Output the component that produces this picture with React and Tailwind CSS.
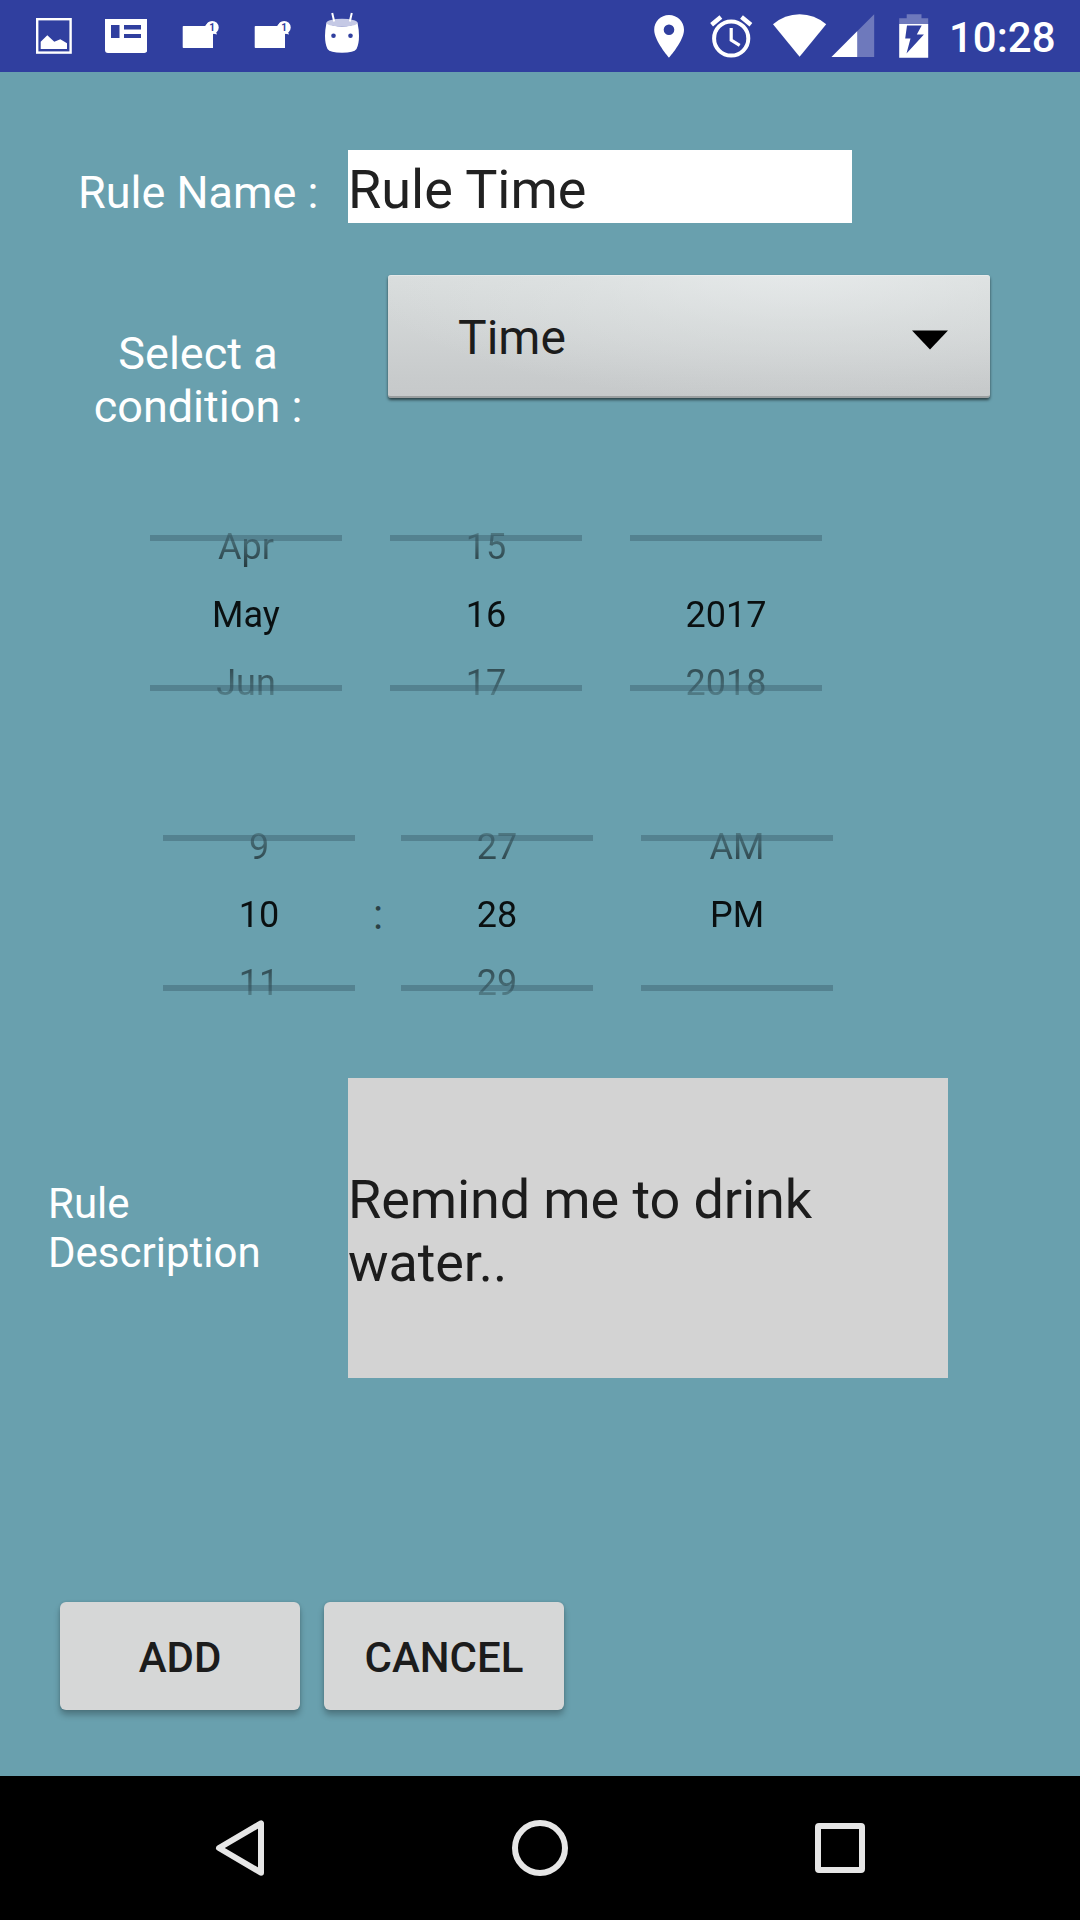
const FADE =
  '[mask-image:linear-gradient(to_bottom,transparent_-6px,black_74px,black_118px,transparent_198px)]';

function PictureIcon() {
  return (
    <svg className="h-[72px] w-[36px]" viewBox="36 0 36 72" fill="none">
      <rect x="37.2" y="19.2" width="33.4" height="33.4" stroke="#fff" strokeWidth="2.4" />
      <path d="M40.7 49V41.7L47.3 35.3L54.3 41.7L60.3 39.3L67 43.3V49Z" fill="#fff" />
    </svg>
  );
}

function NewsIcon() {
  return (
    <svg className="ml-[33px] h-[72px] w-[42px]" viewBox="105 0 42 72" fill="#fff">
      <path
        fillRule="evenodd"
        d="M105 19H147.3V50Q147.3 53 144.3 53H108Q105 53 105 50ZM111 25V38H119.5V25ZM124 25V29.5H141V25ZM124 34V38H141V34Z"
      />
    </svg>
  );
}

function BadgeFolderIcon() {
  return (
    <svg className="h-[72px] w-[37px]" viewBox="182 0 37 72" fill="#fff">
      <path d="M183.5 26H205L209 22L213 26V48H183.5Q182.7 48 182.7 47.2V26.8Q182.7 26 183.5 26Z" />
      <circle cx="212.2" cy="27.4" r="6.5" />
      <path d="M213 32H216L217 34.5L213 33.5Z" />
      <text x="212" y="31" textAnchor="middle" fontFamily="Roboto, sans-serif" fontSize="10" fontWeight="700" fill="#303f9f">
        1
      </text>
    </svg>
  );
}

function MarshmallowIcon() {
  return (
    <svg className="ml-[33px] h-[72px] w-[36px]" viewBox="324 0 36 72">
      <path
        d="M326.5 22.5Q325 30 325 36Q325 44 327.5 49Q330 52.8 342 52.8Q354 52.8 356.5 49Q359 44 359 36Q359 30 357.5 22.5Q352 26.5 342 26.5Q332 26.5 326.5 22.5Z"
        fill="#fff"
      />
      <ellipse cx="342" cy="22.7" rx="15.5" ry="3.9" fill="#c5c9e5" />
      <path d="M332.2 13L334.2 21.5M351.8 13L349.8 21.5" stroke="#fff" strokeWidth="2" />
      <circle cx="333.5" cy="35.8" r="2.3" fill="#303f9f" />
      <circle cx="350.5" cy="35.8" r="2.3" fill="#303f9f" />
    </svg>
  );
}

function StatusBar() {
  return (
    <header className="flex h-[72px] justify-between bg-[#303f9f] pl-9 pr-[24.5px]">
      <div className="flex">
        <PictureIcon />
        <NewsIcon />
        <div className="ml-[35px] flex gap-[35px]">
          <BadgeFolderIcon />
          <BadgeFolderIcon />
        </div>
        <MarshmallowIcon />
      </div>
      <div className="flex">
        <svg className="h-[72px] w-[30px]" viewBox="654.3 0 30 72" fill="#fff">
          <path
            fillRule="evenodd"
            d="M669.3 15C661 15 654.5 21.6 654.5 29.7C654.5 40.8 669.3 57.6 669.3 57.6C669.3 57.6 684.3 40.8 684.3 29.7C684.3 21.6 677.6 15 669.3 15ZM669.3 35.1A5.3 5.3 0 1 1 669.3 24.5A5.3 5.3 0 0 1 669.3 35.1Z"
          />
        </svg>
        <svg className="ml-[26px] h-[72px] w-[43px]" viewBox="710.3 0 43 72" fill="none" stroke="#fff">
          <circle cx="731.5" cy="38.5" r="17.1" strokeWidth="4" />
          <path d="M731.5 28V40L740 45.3" strokeWidth="3.2" />
          <path d="M711.9 24.8L721.2 17M751.2 24.8L741.8 17" strokeWidth="4.4" />
        </svg>
        <svg className="ml-[19.5px] h-[72px] w-[54px]" viewBox="772.8 0 54 72" fill="#fff">
          <path d="M772.8 24.2Q784.5 14.2 799.4 14.2Q814.3 14.2 826 24.2L799.4 56.7Z" />
        </svg>
        <svg className="ml-[4px] h-[72px] w-[44px]" viewBox="830.8 0 44 72" fill="#fff">
          <path d="M831.3 57L874 14.3V57Z" fillOpacity="0.3" />
          <path d="M831.3 57L857 31.3V57Z" />
        </svg>
        <svg className="ml-[24px] h-[72px] w-[30px]" viewBox="898.8 0 30 72" fill="#fff">
          <path d="M899 24V18.2H906.5V14.3H921.3V18.2H928V24Z" fillOpacity="0.3" />
          <path
            fillRule="evenodd"
            d="M899 24H928V57.8H899ZM906.8 25.6L905 38.5H910.3L906.3 53.5L923.7 34.6H916.6L921.5 25.6Z"
          />
        </svg>
        <span className="ml-[20px] text-[42px] font-medium leading-[75px]">10:28</span>
      </div>
    </header>
  );
}

function Wheel({ items }) {
  return (
    <div className="relative h-48 w-48 text-center text-[36px] leading-[68px]">
      <div className={`h-48 overflow-hidden text-black/90 ${FADE}`}>
        <div className="-mt-1">
          {items.map((item, i) => (
            <div key={i} className="h-[68px]">
              {item}
            </div>
          ))}
        </div>
      </div>
      <div className="absolute inset-x-0 top-[18px] h-1.5 bg-[#2d4b5a]/35" />
      <div className="absolute inset-x-0 top-[168px] h-1.5 bg-[#2d4b5a]/35" />
    </div>
  );
}

function Button({ children }) {
  return (
    <button className="h-[108px] w-60 rounded-[6px] bg-[#d6d7d7] pt-0.5 text-[42px] font-medium leading-[49px] text-[#1c1c1c] shadow-[0_5px_6px_rgba(0,0,0,0.26),0_0_3px_rgba(0,0,0,0.12)]">
      {children}
    </button>
  );
}

export default function App() {
  return (
    <div className="flex h-[1920px] w-[1080px] flex-col overflow-hidden bg-[#69a0ae] font-[Roboto,sans-serif] text-white">
      <StatusBar />

      <main className="flex flex-1 flex-col">
        <div className="mt-[78px] flex h-[73px]">
          <label className="w-[348px] whitespace-nowrap pl-[78px] pt-4 text-[45px] leading-[53px]">Rule Name :</label>
          <div className="w-[504px] bg-white pt-2 text-[54px] leading-[63px] text-[#212121]">Rule Time</div>
        </div>

        <div className="mt-[52px] flex h-[150px]">
          <label className="ml-[78px] mt-[52px] w-60 text-center text-[45px] leading-[53px]">
            Select a<br />condition :
          </label>
          <div className="ml-[70px] flex h-[123px] w-[602px] items-center justify-between rounded-[3px] border-b-2 border-[#9a9e9f] bg-[radial-gradient(ellipse_75%_115%_at_68%_-10%,rgba(238,241,242,0.65)_0%,rgba(228,232,232,0.4)_50%,rgba(215,218,218,0)_100%),linear-gradient(to_bottom,#d9dddd_0%,#c8cbcc_85%,#c6c9ca_100%)] pl-[70px] pr-[42px] text-[48px] leading-[56px] text-[#1c1c1c] shadow-[0_2px_3px_rgba(0,0,0,0.6),inset_0_1px_0_rgba(255,255,255,0.3)]">
            <span className="pt-[5px]">Time</span>
            <svg className="mt-[9px] h-5 w-9" viewBox="0 0 36 20">
              <path d="M0 0.5H36L18 19.5Z" fill="#000" />
            </svg>
          </div>
        </div>

        <div className="ml-[150px] mt-[92px] flex gap-12">
          <Wheel items={['Apr', 'May', 'Jun']} />
          <Wheel items={['15', '16', '17']} />
          <Wheel items={['\u00a0', '2017', '2018']} />
        </div>

        <div className="ml-[163px] mt-[108px] flex">
          <Wheel items={['9', '10', '11']} />
          <span className="w-[46px] pt-[73px] text-center text-[42px] leading-[50px] text-black/60">:</span>
          <Wheel items={['27', '28', '29']} />
          <div className="ml-12">
            <Wheel items={['AM', 'PM', '\u00a0']} />
          </div>
        </div>

        <div className="mt-[69px] flex h-[300px]">
          <label className="w-[300px] pl-12 pt-[101px] text-[42px] leading-[49px]">
            Rule<br />Description
          </label>
          <div className="ml-12 w-[600px] bg-[#d3d3d3] pt-[90px] text-[54px] leading-[63px] tracking-[-0.1px] text-[#1c1c1c]">
            Remind me to drink<br />water..
          </div>
        </div>

        <div className="ml-[60px] mt-[224px] flex gap-6">
          <Button>ADD</Button>
          <Button>CANCEL</Button>
        </div>
      </main>

      <nav className="flex h-36 items-center bg-black">
        <svg className="ml-[210px] h-[60px] w-[60px]" viewBox="210 1818 60 60" fill="none" stroke="#e6e6e6" strokeWidth="6" strokeLinejoin="round">
          <path d="M261 1823.3V1872.7L219 1848Z" />
        </svg>
        <svg className="ml-[240px] h-[60px] w-[60px]" viewBox="510 1818 60 60" fill="none" stroke="#e6e6e6" strokeWidth="6">
          <circle cx="540" cy="1848" r="25" />
        </svg>
        <svg className="ml-[240px] h-[60px] w-[60px]" viewBox="810 1818 60 60" fill="none" stroke="#e6e6e6" strokeWidth="6">
          <rect x="818" y="1826" width="44" height="44" rx="1" strokeLinejoin="round" />
        </svg>
      </nav>
    </div>
  );
}
